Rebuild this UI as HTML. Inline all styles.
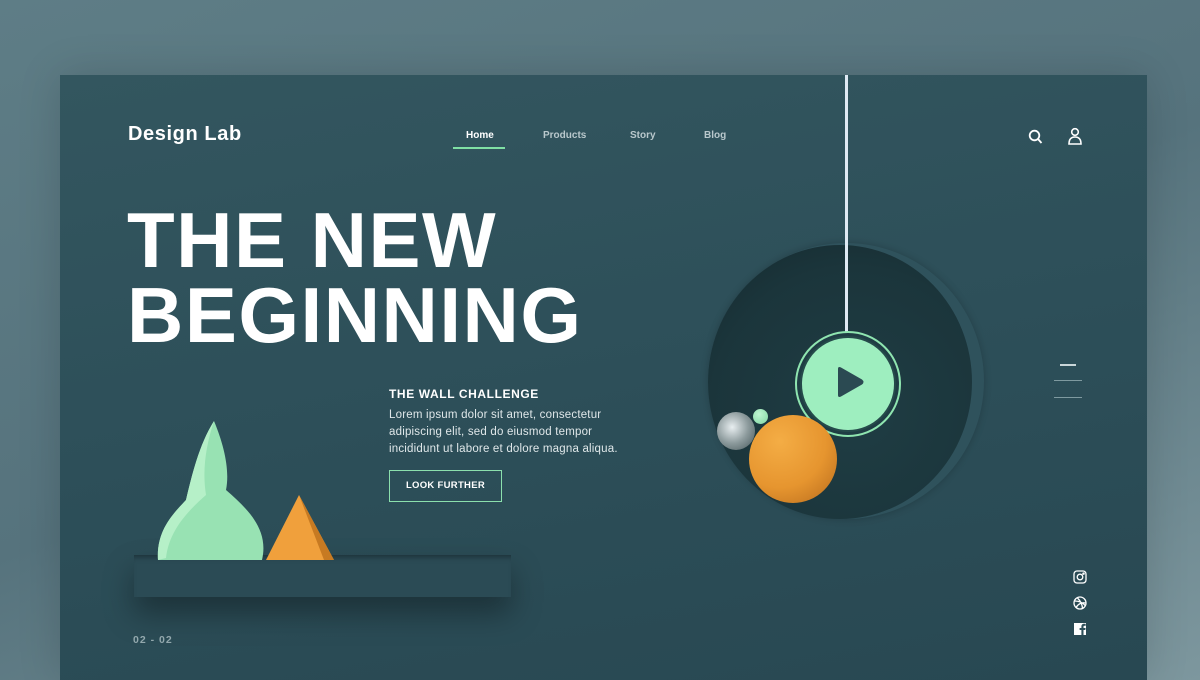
<!DOCTYPE html>
<html><head><meta charset="utf-8"><style>
*{margin:0;padding:0;box-sizing:border-box}
body{width:1200px;height:680px;overflow:hidden;background:linear-gradient(160deg,#5e7d86 0%,#56737d 50%,#7d979e 100%);font-family:"Liberation Sans",sans-serif;position:relative}
.card{position:absolute;left:60px;top:75px;width:1087px;height:605px;background:linear-gradient(170deg,#33565f 0%,#2d4f59 50%,#284852 100%);overflow:hidden;box-shadow:0 0 40px rgba(0,0,0,.15)}
.a{position:absolute}
.logo{left:68px;top:48px;color:#fff;font-weight:bold;font-size:20px;letter-spacing:.6px}
.nav{top:55px;font-size:10px;font-weight:bold;color:#b9c8cc}
h1{position:absolute;left:67px;top:128px;color:#fff;font-size:78px;line-height:75px;font-weight:900;letter-spacing:1.5px}
.t{left:329px;top:312px;color:#fff;font-weight:bold;font-size:12px;letter-spacing:.6px}
.p{left:329px;top:332px;color:#dfe7e9;font-size:11.5px;line-height:17px;letter-spacing:.2px}
.btn{left:329px;top:395px;width:113px;height:32px;border:1.5px solid #8be0ad;color:#fff;font-size:9.5px;font-weight:bold;text-align:center;line-height:29px;letter-spacing:.3px}
</style></head><body>
<div class="card">
<div class="a logo">Design Lab</div>
<div class="a nav" style="left:406px;color:#fff">Home</div>
<div class="a" style="left:393px;top:72px;width:52px;height:2px;background:#7fe0a4"></div>
<div class="a nav" style="left:483px">Products</div>
<div class="a nav" style="left:570px">Story</div>
<div class="a nav" style="left:644px">Blog</div>
<svg class="a" style="left:968px;top:54px" width="16" height="18" viewBox="0 0 16 18" fill="none" stroke="#fff" stroke-width="1.8"><circle cx="6.5" cy="6.5" r="4.8"/><path d="M10 10l3.5 4"/></svg>
<svg class="a" style="left:1007px;top:52px" width="16" height="20" viewBox="0 0 16 20" fill="none" stroke="#fff" stroke-width="1.6"><circle cx="8" cy="5" r="3.3"/><path d="M2 17c0-5 2.5-7 6-7s6 2 6 7z"/></svg>
<h1>THE NEW<br>BEGINNING</h1>
<div class="a t">THE WALL CHALLENGE</div>
<div class="a p">Lorem ipsum dolor sit amet, consectetur<br>adipiscing elit, sed do eiusmod tempor<br>incididunt ut labore et dolore magna aliqua.</div>
<div class="a btn">LOOK FURTHER</div>
<div class="a" style="left:648px;top:168px;width:276px;height:276px;border-radius:50%;background:#2f525c;box-shadow:0 0 8px rgba(0,0,0,.2)"></div>
<div class="a" style="left:648px;top:170px;width:264px;height:274px;border-radius:50%;background:radial-gradient(circle at 55% 60%,#1f3d44 0%,#1b353b 65%,#14282d 100%)"></div>
<div class="a" style="left:785px;top:0;width:3px;height:258px;background:#dfe9f3"></div>
<div class="a" style="left:735px;top:256px;width:106px;height:106px;border-radius:50%;border:2px solid #8fe5b0;background:#1f3d44"></div>
<div class="a" style="left:742px;top:263px;width:92px;height:92px;border-radius:50%;background:#9eeebf;box-shadow:0 0 0 2px #254a4a"></div>
<svg class="a" style="left:775px;top:290px" width="30" height="34" viewBox="0 0 30 34"><path d="M3 4Q3 1 6 2.5L27 14.5Q30 17 27 19.5L6 31.5Q3 33 3 30Z" fill="#2b4a52"/></svg>
<div class="a" style="left:689px;top:340px;width:88px;height:88px;border-radius:50%;background:radial-gradient(circle at 35% 30%,#f4ad45,#e6952f 55%,#b66a1c 100%)"></div>
<div class="a" style="left:657px;top:337px;width:38px;height:38px;border-radius:50%;background:radial-gradient(circle at 40% 40%,#e8eef0,#8c9a9c 50%,#445558 100%)"></div>
<div class="a" style="left:693px;top:334px;width:15px;height:15px;border-radius:50%;background:radial-gradient(circle at 40% 35%,#bff5d2,#7fd6a1)"></div>
<div class="a" style="left:1000px;top:289px;width:16px;height:2px;background:#c9d6d9"></div>
<div class="a" style="left:994px;top:305px;width:28px;height:1px;background:#7f9aa0"></div>
<div class="a" style="left:994px;top:322px;width:28px;height:1px;background:#7f9aa0"></div>
<svg class="a" style="left:1013px;top:495px" width="15" height="70" viewBox="0 0 15 70" fill="none" stroke="#fff" stroke-width="1.3"><rect x="1" y="1" width="12" height="12" rx="3"/><circle cx="7" cy="7" r="2.8"/><circle cx="10.5" cy="3.6" r=".6" fill="#fff"/><circle cx="7" cy="33" r="6"/><path d="M1.5 31c4 0 8 1 11 5M3 37.5c2-3.5 6-5.5 9.5-4.5M4.5 28c3 3 5 7 5 11"/><rect x="1" y="53" width="12" height="12" fill="#fff" stroke="none"/><path d="M10.5 65v-5h1.8l.3-2h-2.1v-1.3c0-.6.2-1 1-1h1.2v-1.8c-.4 0-1-.1-1.6-.1-1.6 0-2.7 1-2.7 2.7V58H6.6v2h1.8v5z" fill="#2d4f59" stroke="none"/></svg>
<div class="a" style="left:74px;top:480px;width:377px;height:42px;background:#2b4b55;box-shadow:0 16px 30px rgba(0,0,0,.35),inset 0 6px 6px -4px rgba(0,0,0,.35)"></div>
<svg class="a" style="left:94px;top:340px" width="190" height="145" viewBox="0 0 190 145"><path d="M4 145C2 115 20 98 32 85C38 60 45 30 60 6C70 30 76 55 72 75C95 95 115 115 108 145Z" fill="#98e2b3"/><path d="M60 6C52 30 48 55 52 80C35 95 15 115 12 143L4 145C2 115 20 98 32 85C38 60 45 30 60 6Z" fill="#b6f0c8"/><path d="M112 145L145 80L180 145Z" fill="#f0a03c"/><path d="M145 80L180 145L170 145Z" fill="#c77a22"/></svg>
<div class="a" style="left:73px;top:559px;color:#93a8ad;font-size:10.5px;font-weight:bold;letter-spacing:1px">02 - 02</div>
</div>
</body></html>
